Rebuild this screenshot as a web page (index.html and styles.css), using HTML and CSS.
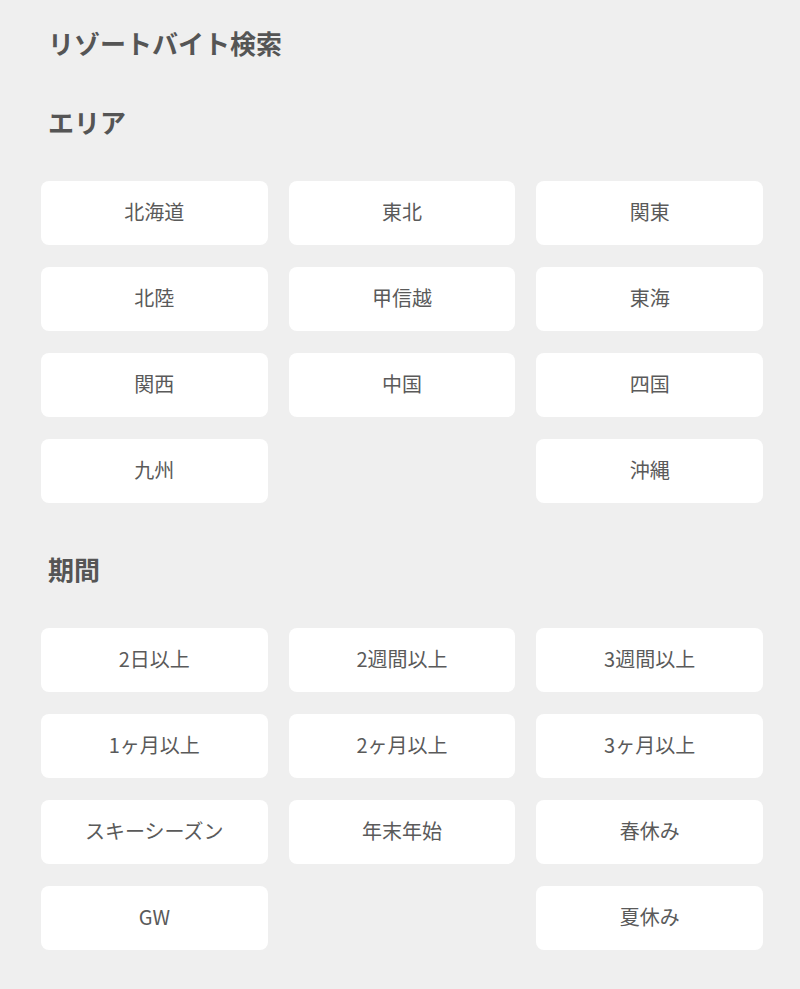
FILE: index.html
```html
<!DOCTYPE html>
<html lang="ja">
<head>
<meta charset="utf-8">
<title>リゾートバイト検索</title>
<link rel="stylesheet" href="styles.css">
</head>
<body>
<main class="page">
  <h1 class="title">リゾートバイト検索</h1>
  <section class="section">
    <h2 class="heading">エリア</h2>
    <div class="grid">
      <a class="btn">北海道</a>
      <a class="btn">東北</a>
      <a class="btn">関東</a>
      <a class="btn">北陸</a>
      <a class="btn">甲信越</a>
      <a class="btn">東海</a>
      <a class="btn">関西</a>
      <a class="btn">中国</a>
      <a class="btn">四国</a>
      <a class="btn">九州</a>
      <span class="empty"></span>
      <a class="btn">沖縄</a>
    </div>
  </section>
  <section class="section section-next">
    <h2 class="heading">期間</h2>
    <div class="grid">
      <a class="btn">2日以上</a>
      <a class="btn">2週間以上</a>
      <a class="btn">3週間以上</a>
      <a class="btn">1ヶ月以上</a>
      <a class="btn">2ヶ月以上</a>
      <a class="btn">3ヶ月以上</a>
      <a class="btn">スキーシーズン</a>
      <a class="btn">年末年始</a>
      <a class="btn">春休み</a>
      <a class="btn">GW</a>
      <span class="empty"></span>
      <a class="btn">夏休み</a>
    </div>
  </section>
</main>
</body>
</html>
```
FILE: styles.css
```css
html, body {
  margin: 0;
  padding: 0;
  background: #efefef;
}
body {
  font-family: "Noto Sans CJK JP", "Noto Sans", sans-serif;
  color: #555;
}
.page {
  padding: 25px 37px 38px 41px;
}
.title {
  margin: 0 0 43px;
  padding-left: 7px;
  font-size: 26px;
  line-height: 36px;
  font-weight: 700;
  color: #555;
}
.heading {
  margin: 0 0 41px;
  padding-left: 7px;
  font-size: 26px;
  line-height: 36px;
  font-weight: 700;
  color: #555;
}
.section-next {
  margin-top: 48px;
}
.grid {
  display: grid;
  grid-template-columns: repeat(3, 1fr);
  column-gap: 21px;
  row-gap: 22px;
}
.btn {
  display: flex;
  align-items: center;
  justify-content: center;
  box-sizing: border-box;
  height: 64px;
  padding-bottom: 3px;
  background: #fff;
  border-radius: 8px;
  font-size: 20px;
  font-weight: 400;
  color: #5a5a5a;
  text-decoration: none;
}
```
